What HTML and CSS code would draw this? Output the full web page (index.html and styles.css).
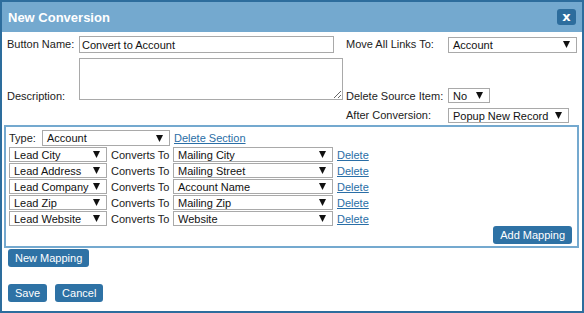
FILE: index.html
```html
<!DOCTYPE html>
<html>
  <head>
    <title>New Conversion</title>
    <link rel="stylesheet" href="styles.css">
  </head>
  <body>
    <div class="dialog">
      <div class="titlebar">
        <span>New Conversion</span>
        <span class="close">x</span>
      </div>
      <div class="content">
        <!-- top form fields -->
        <div class="form-grid">
          <label class="lbl">Button Name:</label>
          <input class="text-input" type="text" value="Convert to Account">
          <label class="lbl">Move All Links To:</label>
          <div class="select sel-links"><span>Account</span><svg width="7" height="7" viewBox="0 0 7 7"><polygon points="0,0 7,0 3.5,7" fill="#111"/></svg></div>

          <label class="lbl lbl-bottom">Description:</label>
          <textarea class="desc"></textarea>
          <label class="lbl lbl-bottom">Delete Source Item:</label>
          <div class="select sel-no"><span>No</span><svg width="7" height="7" viewBox="0 0 7 7"><polygon points="0,0 7,0 3.5,7" fill="#111"/></svg></div>

          <span></span>
          <span></span>
          <label class="lbl">After Conversion:</label>
          <div class="select sel-after"><span>Popup New Record</span><svg width="7" height="7" viewBox="0 0 7 7"><polygon points="0,0 7,0 3.5,7" fill="#111"/></svg></div>
        </div>

        <!-- mapping section -->
        <div class="section">
          <div class="type-row">
            <label class="type-lbl">Type:</label>
            <div class="select sel-type"><span>Account</span><svg width="7" height="7" viewBox="0 0 7 7"><polygon points="0,0 7,0 3.5,7" fill="#111"/></svg></div>
            <a href="#" class="link">Delete Section</a>
          </div>
          <div id="mappings"></div>
          <div class="section-foot">
            <button class="btn">Add Mapping</button>
          </div>
        </div>

        <button class="btn btn-new">New Mapping</button>
        <div class="actions">
          <button class="btn">Save</button>
          <button class="btn">Cancel</button>
        </div>
      </div>
    </div>
    <script>
      // mapping rows
      const mappings = [
        ["Lead City", "Mailing City"],
        ["Lead Address", "Mailing Street"],
        ["Lead Company", "Account Name"],
        ["Lead Zip", "Mailing Zip"],
        ["Lead Website", "Website"],
      ];
      const arrow =
        '<svg width="7" height="7" viewBox="0 0 7 7"><polygon points="0,0 7,0 3.5,7" fill="#111"/></svg>';
      const mappingsElement = document.getElementById("mappings");
      mappings.forEach(([from, to]) => {
        const row = document.createElement("div");
        row.className = "map-row";
        row.innerHTML =
          '<div class="select sel-from"><span>' + from + "</span>" + arrow + "</div>" +
          '<span class="converts">Converts To</span>' +
          '<div class="select sel-to"><span>' + to + "</span>" + arrow + "</div>" +
          '<a href="#" class="link">Delete</a>';
        mappingsElement.appendChild(row);
      });
    </script>
  </body>
</html>
```

FILE: styles.css
```css
/* page */
body {
  margin: 0;
  font-family: "Liberation Sans", Arial, sans-serif;
  font-size: 11px;
  color: #222;
}
.dialog {
  width: 584px;
  height: 313px;
  box-sizing: border-box;
  border: 2px solid #2d6d9d;
  background: #fff;
}
/* title bar */
.titlebar {
  height: 30px;
  background: #74a9cf;
  color: #fff;
  font-size: 13px;
  font-weight: bold;
  display: flex;
  align-items: center;
  justify-content: space-between;
  padding: 0 6px 0 6px;
}
.close {
  width: 19px;
  height: 16px;
  background: #2d6d9d;
  border-radius: 3px;
  display: flex;
  align-items: center;
  justify-content: center;
  font-family: "DejaVu Sans", sans-serif;
  font-size: 13px;
  font-weight: bold;
  line-height: 1;
  padding-bottom: 2px;
  box-sizing: border-box;
}
.content {
  padding: 4px 3px 0 2px;
}
/* top form */
.form-grid {
  display: grid;
  grid-template-columns: 72px 267px 102px 129px;
  grid-template-rows: 17px 46px 17px;
  row-gap: 4px;
  margin-left: 3px;
  align-items: center;
}
.lbl {
  line-height: 13px;
}
.lbl-bottom {
  align-self: end;
}
.text-input {
  width: 255px;
  height: 17px;
  box-sizing: border-box;
  border: 1px solid #a9a9a9;
  padding: 0 2px;
  font: inherit;
  color: #111;
  margin: 0;
}
.desc {
  align-self: start;
  margin: 1px 0 0 0;
  width: 264px;
  height: 42px;
  box-sizing: border-box;
  border: 1px solid #a9a9a9;
  font: inherit;
  padding: 2px;
}
/* select look-alike */
.select {
  display: flex;
  align-items: center;
  justify-content: space-between;
  box-sizing: border-box;
  height: 15px;
  border: 1px solid #a9a9a9;
  padding: 0 6px 0 4px;
  color: #111;
  background: #fff;
  white-space: nowrap;
}
.sel-links {
  width: 129px;
  height: 16px;
}
.sel-no {
  width: 42px;
  align-self: end;
}
.sel-after {
  width: 121px;
}
/* mapping section */
.section {
  margin-top: 1px;
  border: 2px solid #74a9cf;
  padding: 3px 5px 2px 3px;
}
.type-row {
  display: flex;
  align-items: center;
  height: 16px;
}
.type-lbl {
  width: 33px;
}
.sel-type {
  width: 128px;
  height: 16px;
}
.type-row .link {
  margin-left: 4px;
}
.link {
  color: #2a6ea6;
  text-decoration: underline;
}
#mappings {
  margin-top: 1px;
}
.map-row {
  display: flex;
  align-items: center;
  gap: 4px;
  height: 15px;
  margin-bottom: 1px;
}
.sel-from {
  width: 98px;
}
.converts {
  width: 58px;
  white-space: nowrap;
}
.sel-to {
  width: 160px;
}
.section-foot {
  display: flex;
  justify-content: flex-end;
  margin-top: -1px;
}
/* buttons */
.btn {
  background: #2e72a5;
  color: #fff;
  border: none;
  border-radius: 3px;
  height: 18px;
  padding: 0 7px;
  font: inherit;
  font-size: 11px;
  cursor: pointer;
}
.btn-new {
  margin: 1px 0 0 4px;
}
.actions {
  display: flex;
  gap: 8px;
  margin: 17px 0 0 4px;
}
```
